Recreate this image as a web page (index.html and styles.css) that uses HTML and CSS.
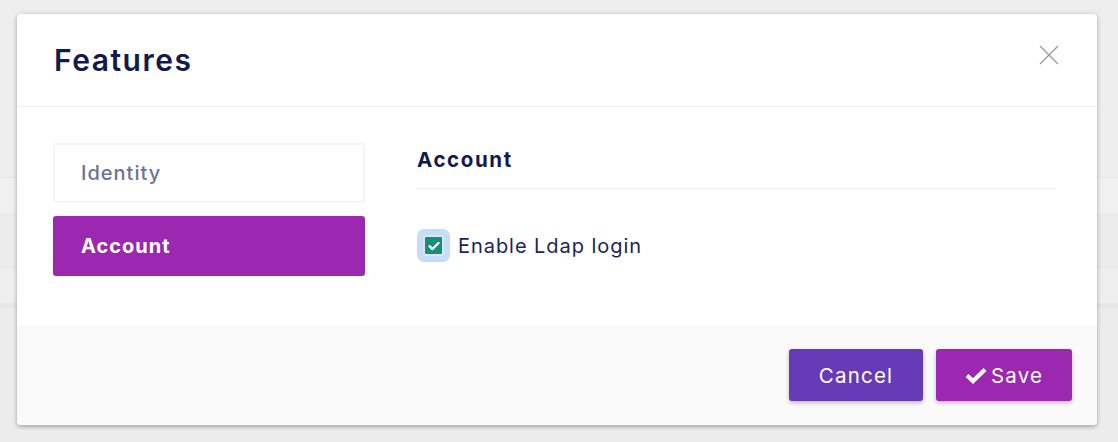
FILE: index.html
```html
<!DOCTYPE html>
<html>
<head>
<meta charset="utf-8">
<link rel="stylesheet" href="styles.css">
</head>
<body>
<div class="backdrop">
  <div class="row r1"></div>
  <div class="row r2"></div>
  <div class="row r3"></div>
  <div class="row r4"></div>
  <div class="row r5"></div>
  <div class="row r6"></div>
</div>
<div class="modal">
  <div class="modal-header">
    <h1 class="modal-title">Features</h1>
    <button class="close" aria-label="Close">
      <svg width="20" height="20" viewBox="0 0 20 20"><path d="M1 1L19 19M19 1L1 19" stroke="#9a9a9a" stroke-width="1.3" fill="none"/></svg>
    </button>
  </div>
  <div class="modal-body">
    <div class="tabs">
      <div class="tab">Identity</div>
      <div class="tab active">Account</div>
    </div>
    <div class="pane">
      <h2 class="pane-title">Account</h2>
      <label class="check-row">
        <span class="check-ring"><span class="check-box">
          <svg width="12" height="10" viewBox="0 0 12 10"><path d="M1.5 5.2L4.5 8L10.5 2" stroke="#fff" stroke-width="2.4" fill="none" stroke-linecap="round" stroke-linejoin="round"/></svg>
        </span></span>
        <span class="check-label">Enable Ldap login</span>
      </label>
    </div>
  </div>
  <div class="modal-footer">
    <button class="btn btn-cancel">Cancel</button>
    <button class="btn btn-save">
      <svg width="22" height="17" viewBox="0 0 22 17"><path d="M2 8.5L8 14L20 2.5" stroke="#fff" stroke-width="4.2" fill="none" stroke-linejoin="miter"/></svg>
      Save
    </button>
  </div>
</div>
</body>
</html>
```
FILE: styles.css
```css
* { box-sizing: border-box; }
html, body { margin: 0; padding: 0; }
body {
  width: 1118px;
  height: 442px;
  overflow: hidden;
  background: #ececec;
  font-family: "Inter", "Noto Sans", sans-serif;
  position: relative;
}
.backdrop { display: flex; flex-direction: column; }
.row { border-bottom: 1px solid #e6e6e6; }
.r1 { height: 178px; background: #eeeeee; }
.r2 { height: 37px; background: #f0f0f0; }
.r3 { height: 53px; background: #ececec; }
.r4 { height: 36px; background: #efefef; }
.r5 { height: 4px; background: #e6e6e6; border: 0; }
.r6 { height: 140px; background: #ececec; border: 0; }

.modal {
  position: absolute;
  left: 17px;
  top: 14px;
  width: 1080px;
  background: #fff;
  border-radius: 4px;
  box-shadow: 0 2px 4px rgba(0,0,0,0.25), 0 0 6px rgba(0,0,0,0.08);
  overflow: hidden;
}
.modal-header {
  height: 93px;
  border-bottom: 1px solid #f2f2f2;
  display: flex;
  align-items: center;
  justify-content: space-between;
  padding: 0 37px 0 37px;
}
.modal-title {
  margin: 0;
  font-size: 30px;
  font-weight: 600;
  color: #121a4e;
  letter-spacing: 1.5px;
}
.close {
  border: 0;
  background: none;
  padding: 0;
  width: 20px;
  height: 20px;
  margin-right: 1px;
  margin-top: -10px;
}
.close svg { display: block; }
.modal-body {
  display: flex;
  padding: 36px 42px 49px 36px;
  gap: 52px;
}
.tabs {
  width: 312px;
  display: flex;
  flex-direction: column;
  gap: 13px;
}
.tab {
  height: 60px;
  border: 2px solid #f5f5f5;
  border-radius: 3px;
  display: flex;
  align-items: center;
  padding-left: 26px;
  font-size: 20px;
  font-weight: 500;
  color: #6b7394;
  letter-spacing: 1px;
}
.tab.active {
  background: #9c27b0;
  border-color: #9c27b0;
  color: #fff;
  font-weight: 700;
}
.pane { flex: 1; }
.pane-title {
  margin: 0;
  padding: 4px 0 16px;
  font-size: 20.5px;
  font-weight: 700;
  color: #121a4e;
  letter-spacing: 1.6px;
  border-bottom: 1px solid #eeeeee;
}
.check-row {
  display: flex;
  align-items: center;
  margin-top: 40px;
  gap: 8px;
}
.check-ring {
  width: 33px;
  height: 33px;
  border-radius: 7px;
  background: #c4def9;
  display: flex;
  align-items: center;
  justify-content: center;
}
.check-box {
  width: 21px;
  height: 21px;
  border-radius: 3px;
  border: 2px solid #e3e3e3;
  background: #12907f;
  display: flex;
  align-items: center;
  justify-content: center;
}
.check-box svg { display: block; }
.check-label {
  font-size: 20px;
  color: #1d2456;
  letter-spacing: 0.95px;
}
.modal-footer {
  background: #fafafa;
  display: flex;
  justify-content: flex-end;
  gap: 13px;
  padding: 24px 25px 24px 0;
}
.btn {
  height: 52px;
  border: 0;
  border-radius: 3px;
  color: #fff;
  font-family: inherit;
  font-size: 20.5px;
  letter-spacing: 1.2px;
  box-shadow: 0 2px 4px rgba(0,0,0,0.25);
  display: flex;
  align-items: center;
  justify-content: center;
  gap: 4px;
}
.btn-cancel { width: 134px; background: #673ab7; }
.btn-save { width: 136px; background: #9c27b0; }
.btn svg { display: block; }
```
